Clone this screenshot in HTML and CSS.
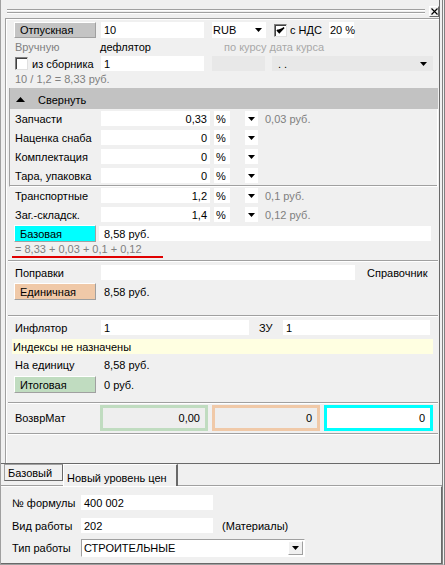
FILE: index.html
```html
<!DOCTYPE html>
<html>
<head>
<meta charset="utf-8">
<link rel="stylesheet" href="styles.css">
</head>
<body>
<div class="window">
  <div class="upper">
    <div class="grip">
      <div class="grip-lines"></div>
      <div class="close"><svg width="7" height="7" viewBox="0 0 7 7"><path d="M0.5 0.5L6.5 6.5M6.5 0.5L0.5 6.5" stroke="#000" stroke-width="1.2"/></svg></div>
    </div>
    <div class="panel">
      <div class="row r1">
        <div class="btn btn-gray">Отпускная</div>
        <div class="fld w-main">10</div>
        <div class="fld combo w-cur"><span>RUB</span><svg class="arr" width="7" height="4" viewBox="0 0 7 4"><path d="M0 0h7L3.5 4z"/></svg></div>
        <div class="chk"><svg width="11" height="11" viewBox="0 0 11 11"><path d="M2 5L4.3 7.5L9 2.5" fill="none" stroke="#000" stroke-width="1.8"/></svg></div>
        <span class="chk-text">с НДС</span>
        <div class="fld w-vat">20 %</div>
      </div>
      <div class="row r2">
        <span class="lbl gray">Вручную</span>
        <span class="defl">дефлятор</span>
        <span class="lightgray">по курсу дата курса</span>
      </div>
      <div class="row r3">
        <div class="chk chk-left"></div>
        <span class="chk-text2">из сборника</span>
        <div class="fld w-main">1</div>
        <div class="dis w-dis1"></div>
        <div class="dis w-dis2"><span>. .</span><svg class="arr" width="7" height="4" viewBox="0 0 7 4"><path d="M0 0h7L3.5 4z"/></svg></div>
      </div>
      <div class="row r4 gray"><span class="pad1">10 / 1,2 = 8,33 руб.</span></div>

      <div class="bar"><svg class="up" width="9" height="5" viewBox="0 0 9 5"><path d="M0 5h9L4.5 0z"/></svg><span>Свернуть</span></div>
      <div class="group">
        <div class="row grow">
          <span class="lbl">Запчасти</span>
          <div class="fld num w-val">0,33</div>
          <div class="fld pct">%</div>
          <div class="fld arrbox"><svg width="7" height="4" viewBox="0 0 7 4"><path d="M0 0h7L3.5 4z"/></svg></div>
          <span class="note gray">0,03 руб.</span>
        </div>
        <div class="row grow">
          <span class="lbl">Наценка снаба</span>
          <div class="fld num w-val">0</div>
          <div class="fld pct">%</div>
          <div class="fld arrbox"><svg width="7" height="4" viewBox="0 0 7 4"><path d="M0 0h7L3.5 4z"/></svg></div>
        </div>
        <div class="row grow">
          <span class="lbl">Комплектация</span>
          <div class="fld num w-val">0</div>
          <div class="fld pct">%</div>
          <div class="fld arrbox"><svg width="7" height="4" viewBox="0 0 7 4"><path d="M0 0h7L3.5 4z"/></svg></div>
        </div>
        <div class="row grow">
          <span class="lbl">Тара, упаковка</span>
          <div class="fld num w-val">0</div>
          <div class="fld pct">%</div>
          <div class="fld arrbox"><svg width="7" height="4" viewBox="0 0 7 4"><path d="M0 0h7L3.5 4z"/></svg></div>
        </div>
      </div>

      <div class="row trow t1">
        <span class="lbl">Транспортные</span>
        <div class="fld num w-val">1,2</div>
        <div class="fld pct">%</div>
        <div class="fld arrbox"><svg width="7" height="4" viewBox="0 0 7 4"><path d="M0 0h7L3.5 4z"/></svg></div>
        <span class="note gray">0,1 руб.</span>
      </div>
      <div class="row trow t2">
        <span class="lbl">Заг.-складск.</span>
        <div class="fld num w-val">1,4</div>
        <div class="fld pct">%</div>
        <div class="fld arrbox"><svg width="7" height="4" viewBox="0 0 7 4"><path d="M0 0h7L3.5 4z"/></svg></div>
        <span class="note gray">0,12 руб.</span>
      </div>
      <div class="row brow base-row">
        <div class="btn btn-cyan">Базовая</div>
        <div class="fld w-base">8,58 руб.</div>
      </div>
      <div class="formula gray">= 8,33 + 0,03 + 0,1 + 0,12</div>
      <div class="sep sep1"></div>

      <div class="row prow">
        <span class="lbl">Поправки</span>
        <div class="fld w-corr"></div>
        <span class="ref">Справочник</span>
      </div>
      <div class="row brow unit-row">
        <div class="btn btn-peach">Единичная</div>
        <span class="val">8,58 руб.</span>
      </div>
      <div class="sep sep2"></div>

      <div class="row irow">
        <span class="lbl">Инфлятор</span>
        <div class="fld w-infl">1</div>
        <span class="zu">ЗУ</span>
        <div class="fld w-zu">1</div>
      </div>
      <div class="notice">Индексы не назначены</div>
      <div class="row perrow">
        <span class="lbl">На единицу</span>
        <span class="val">8,58 руб.</span>
      </div>
      <div class="row brow total-row">
        <div class="btn btn-green">Итоговая</div>
        <span class="val">0 руб.</span>
      </div>
      <div class="sep sep3"></div>
      <div class="row boxrow">
        <span class="lbl lbl-box">ВозврМат</span>
        <div class="box box-green">0,00</div>
        <div class="box box-peach">0</div>
        <div class="box box-cyan">0</div>
      </div>
      <div class="sep sep4"></div>
    </div>
  </div>

  <div class="tabs">
    <div class="tab-gap"></div>
    <div class="tab-cell"><div class="tab tab-off">Базовый</div></div>
    <div class="tab tab-on">Новый уровень цен</div>
    <div class="tab-rest"></div>
  </div>

  <div class="lower">
    <div class="lrow">
      <span class="llbl">№ формулы</span>
      <div class="fld w-low">400 002</div>
    </div>
    <div class="lrow lr2">
      <span class="llbl">Вид работы</span>
      <div class="fld w-low">202</div>
      <span class="mat">(Материалы)</span>
    </div>
    <div class="lrow lr3">
      <span class="llbl">Тип работы</span>
      <div class="select">
        <span>СТРОИТЕЛЬНЫЕ</span>
        <div class="sel-btn"><svg width="7" height="4" viewBox="0 0 7 4"><path d="M0 0h7L3.5 4z"/></svg></div>
      </div>
    </div>
  </div>
</div>
</body>
</html>
```

FILE: styles.css
```css
* { box-sizing: border-box; }
html, body { margin: 0; padding: 0; }
body {
  font-family: "Liberation Sans", Arial, sans-serif;
  font-size: 11px;
  color: #000;
  background: #f0f0f0;
}
svg path { fill: #000; }

.window {
  width: 445px;
  height: 565px;
  background: #f0f0f0;
  border-left: 1px solid #a0a0a0;
  border-right: 3px double #808080;
  border-bottom: 1px solid #a0a0a0;
  display: flex;
  flex-direction: column;
  overflow: hidden;
}

/* ---------- upper panel ---------- */
.upper {
  width: 439px;
  height: 464px;
  flex: none;
  display: flex;
  flex-direction: column;
  padding-left: 4px;
  border-right: 1px solid #696969;
  border-bottom: 1px solid #696969;
}
.grip {
  height: 18px;
  flex: none;
  display: flex;
  align-items: flex-start;
}
.grip-lines {
  margin-left: 2px;
  margin-top: 9px;
  width: 419px;
  height: 4px;
  border-top: 1px solid #a0a0a0;
  border-bottom: 1px solid #a0a0a0;
  box-shadow: 0 1px #fff, inset 0 1px #fff;
}
.close {
  margin-left: 4px;
  margin-top: 6px;
  width: 10px;
  height: 11px;
  border: 1px solid #fff;
  border-right-color: #696969;
  border-bottom-color: #696969;
  display: flex;
  align-items: center;
  justify-content: center;
}
.panel {
  flex: 1;
  display: flex;
  flex-direction: column;
  border-top: 1px solid #a0a0a0;
  border-left: 1px solid #a0a0a0;
  box-shadow: inset 1px 1px #fff;
}

.row {
  display: flex;
  align-items: center;
  padding-left: 8px;
  white-space: nowrap;
  flex: none;
}
.gray { color: #7f7f7f; }
.lightgray { color: #a8a8a8; }
.lbl { width: 87px; padding-left: 1px; flex: none; }
.pad1 { padding-left: 1px; }

.fld {
  background: #fff;
  height: 15px;
  padding: 0 3px;
  display: flex;
  align-items: center;
  flex: none;
  white-space: nowrap;
}
.num { justify-content: flex-end; }

.btn {
  width: 82px;
  height: 16px;
  flex: none;
  display: flex;
  align-items: center;
  padding-left: 5px;
  border: 1px solid #fff;
  border-right-color: #a0a0a0;
  border-bottom-color: #a0a0a0;
}
.btn-gray { background: #c4c4c4; }
.btn-cyan { background: #00ffff; height: 17px; }
.btn-peach { background: #f0c9a8; height: 17px; }
.btn-green { background: #c0dcc0; height: 17px; }

/* row 1 */
.r1 { margin-top: 3px; height: 16px; }
.r1 .fld { height: 16px; }
.w-main { width: 103px; margin-left: 5px; }
.combo {
  justify-content: space-between;
  padding: 0 4px 0 1px;
}
.w-cur { width: 54px; margin-left: 8px; }
.chk {
  width: 13px;
  height: 13px;
  flex: none;
  margin-left: 8px;
  background: #fff;
  border: 1px solid #808080;
  border-right-color: #e0e0e0;
  border-bottom-color: #e0e0e0;
  box-shadow: inset 1px 1px #404040;
  display: flex;
  align-items: center;
  justify-content: center;
}
.chk-text { width: 42px; padding-left: 3px; flex: none; }
.w-vat { width: 25px; padding: 0 1px; }

/* row 2 */
.r2 { margin-top: 1px; height: 15px; }
.r2 .lbl { width: 86px; }
.defl { width: 124px; flex: none; }

/* row 3 */
.r3 { margin-top: 2px; height: 15px; }
.chk-left { margin-left: 1px; }
.chk-text2 { width: 73px; padding-left: 4px; flex: none; }
.r3 .w-main { margin-left: 0; }
.dis { background: #e8e8e8; height: 15px; flex: none; }
.w-dis1 { width: 53px; margin-left: 8px; }
.w-dis2 {
  width: 161px;
  margin-left: 7px;
  display: flex;
  align-items: center;
  justify-content: space-between;
  padding: 0 6px 0 6px;
  color: #000;
}

/* row 4 */
.r4 { margin-top: 1px; height: 14px; }

/* collapse bar */
.bar {
  margin-top: 2px;
  margin-left: 3px;
  margin-right: 1px;
  height: 21px;
  flex: none;
  background: #c2c2c2;
  border-left: 1px solid #a0a0a0;
  display: flex;
  align-items: center;
  padding-left: 6px;
  padding-top: 3px;
}
.bar .up { margin-right: 13px; margin-top: -2px; }

.group {
  margin-left: 3px;
  margin-right: 1px;
  height: 78px;
  flex: none;
  border-left: 1px solid #a0a0a0;
  border-right: 1px solid #fff;
  border-bottom: 1px solid #fff;
  box-shadow: 0 -1px 0 #a0a0a0 inset;
  padding-top: 2px;
  display: flex;
  flex-direction: column;
  gap: 4px;
}
.grow { padding-left: 4px; height: 15px; }
.w-val { width: 109px; }
.pct { width: 16px; margin-left: 4px; padding: 0 2px; }
.arrbox { width: 13px; margin-left: 15px; justify-content: center; padding: 0; }
.note { margin-left: 7px; }

.trow { height: 15px; }
.t1 { margin-top: 1px; }
.t2 { margin-top: 4px; }

.brow { height: 17px; }
.base-row { margin-top: 3px; }
.w-base { width: 332px; margin-left: 3px; padding-left: 5px; }

.formula {
  margin-top: 1px;
  margin-left: 6px;
  width: 151px;
  height: 15px;
  line-height: 13px;
  padding-left: 3px;
  border-bottom: 2px solid #e00000;
  white-space: nowrap;
  flex: none;
}

.sep {
  margin-left: 2px;
  margin-right: 1px;
  height: 2px;
  flex: none;
  border-top: 1px solid #a0a0a0;
  border-bottom: 1px solid #fff;
}
.sep1 { margin-top: 2px; }
.sep2 { margin-top: 15px; }
.sep3 { margin-top: 9px; }
.sep4 { margin-top: 2px; }

.prow { margin-top: 3px; height: 15px; }
.w-corr { width: 254px; }
.ref { margin-left: 12px; }

.unit-row { margin-top: 3px; }
.val { margin-left: 8px; }

.irow { margin-top: 3px; height: 15px; }
.w-infl { width: 148px; }
.zu { width: 34px; padding-left: 10px; flex: none; }
.w-zu { width: 147px; }

.notice {
  margin-top: 4px;
  margin-left: 6px;
  width: 421px;
  height: 15px;
  flex: none;
  background: #ffffe1;
  padding-left: 1px;
  display: flex;
  align-items: center;
}

.perrow { margin-top: 4px; height: 14px; }
.perrow .val { margin-left: 3px; }
.total-row { margin-top: 4px; }

.boxrow { margin-top: 1px; height: 26px; }
.lbl-box { width: 86px; }
.box {
  width: 108px;
  height: 26px;
  flex: none;
  border: 3px solid;
  display: flex;
  align-items: center;
  justify-content: flex-end;
  padding-right: 5px;
  margin-right: 4px;
}
.box-green { border-color: #c0dcc0; background: #eeeeee; }
.box-peach { border-color: #f0c9a8; background: #eeeeee; }
.box-cyan { border-color: #00ffff; background: #fff; width: 109px; margin-right: 0; box-shadow: inset 0 0 0 1px #fff; }

/* ---------- tabs ---------- */
.tabs {
  height: 22px;
  flex: none;
  display: flex;
  width: 441px;
}
.tab-gap { width: 3px; border-bottom: 1px solid #a0a0a0; }
.tab-cell {
  width: 59px;
  border-bottom: 1px solid #a0a0a0;
}
.tab {
  display: flex;
  align-items: center;
  white-space: nowrap;
}
.tab-off {
  height: 17px;
  border: 1px solid #a0a0a0;
  border-right-color: #696969;
  border-bottom-color: #696969;
  padding-left: 3px;
  padding-top: 1px;
}
.tab-on {
  width: 115px;
  height: 22px;
  border-top: 1px solid #fff;
  border-left: 1px solid #fff;
  border-right: 2px solid #696969;
  padding-left: 3px;
  padding-top: 4px;
}
.tab-rest { flex: 1; border-bottom: 1px solid #a0a0a0; }

/* ---------- lower ---------- */
.lower {
  flex: 1;
  width: 441px;
  border-top: 1px solid #fff;
  border-right: 1px solid #696969;
  border-bottom: 1px solid #696969;
  padding: 8px 0 0 11px;
  display: flex;
  flex-direction: column;
}
.lrow {
  display: flex;
  align-items: center;
  height: 15px;
  flex: none;
  white-space: nowrap;
}
.lr2 { margin-top: 8px; }
.lr3 { margin-top: 6px; height: 18px; }
.llbl { width: 69px; flex: none; }
.w-low { width: 132px; }
.mat { margin-left: 9px; }
.select {
  width: 224px;
  height: 18px;
  flex: none;
  background: #fff;
  border: 1px solid #a0a0a0;
  border-right-color: #fff;
  border-bottom-color: #fff;
  display: flex;
  align-items: center;
  justify-content: space-between;
  padding: 1px 1px 1px 2px;
}
.sel-btn {
  width: 15px;
  height: 14px;
  background: #f0f0f0;
  border: 1px solid #fff;
  border-right-color: #a0a0a0;
  border-bottom-color: #a0a0a0;
  display: flex;
  align-items: center;
  justify-content: center;
}
```
